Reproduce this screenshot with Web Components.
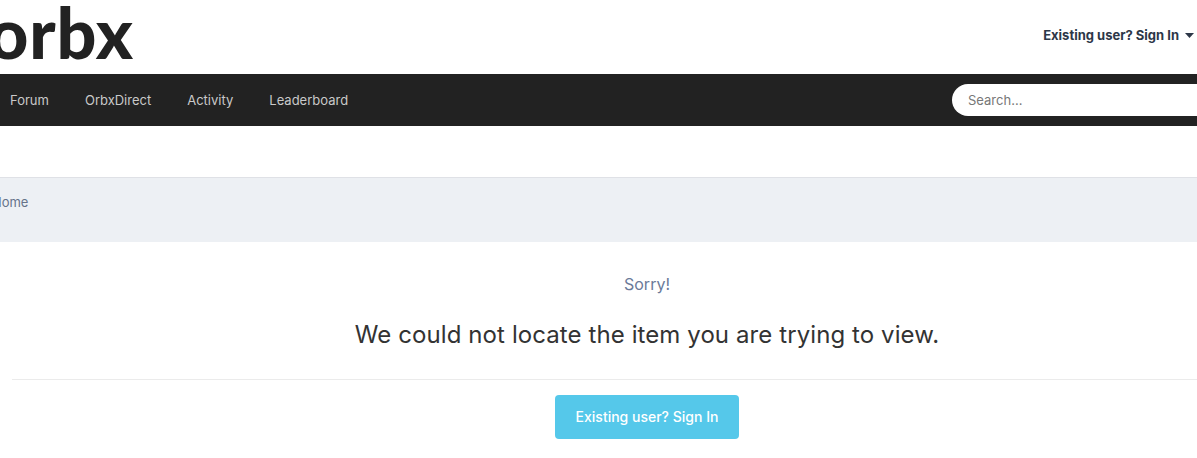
<!DOCTYPE html>
<html><head><meta charset="utf-8"><style>
html,body{margin:0;padding:0;background:#fff;overflow:hidden;height:458px}
body{font-family:Inter,"Liberation Sans",sans-serif}
</style></head><body>
<site-header></site-header>
<site-nav>
<nav-link>Forum</nav-link><nav-link>OrbxDirect</nav-link><nav-link>Activity</nav-link><nav-link>Leaderboard</nav-link>
</site-nav>
<bread-crumb>Home</bread-crumb>
<error-panel></error-panel>
<script>
function def(name,html){customElements.define(name,class extends HTMLElement{constructor(){super();this.attachShadow({mode:'open'}).innerHTML=html;}});}
def('site-header',`<style>
:host{display:flex;justify-content:space-between;align-items:center;height:74px;overflow:hidden;color:#222}
.logo{margin-left:-12px;margin-top:-11px;font:900 70px/74px Lato,sans-serif;letter-spacing:.8px;color:#222}
.user{display:flex;align-items:center;gap:6px;font:700 13px/20px Inter,sans-serif;color:#2d3748;margin-right:3px;margin-bottom:4px}
svg{display:block}
</style><div class="logo">orbx</div><div class="user">Existing user? Sign In<svg width="9" height="5" viewBox="0 0 9 5"><path d="M0 0h9L4.5 5z" fill="#2d3748"/></svg></div>`);
def('site-nav',`<style>
:host{display:flex;justify-content:space-between;align-items:center;height:52px;background:#222;overflow:hidden}
.links{display:flex;gap:36px;padding-left:10px}
.search{flex:none;width:300px;height:32px;margin-right:-55px;background:#fff;border-radius:16px;box-sizing:border-box;padding-left:16px;font:13px/32px Inter,sans-serif;color:#777}
</style><div class="links"><slot></slot></div><div class="search">Search...</div>`);
def('nav-link',`<style>:host{display:block;font:400 13px/20px Inter,sans-serif;color:#c9c9c9}</style><slot></slot>`);
def('bread-crumb',`<style>
:host{display:block;margin-top:51px;height:65px;background:#edf0f4;box-shadow:inset 0 1px 0 #dfe1e6;overflow:hidden;font:13px/20px Inter,sans-serif;color:#66738a}
div{margin-left:-8px;padding-top:15px}
</style><div><slot></slot></div>`);
def('error-panel',`<style>
:host{display:block;width:1270px;margin-left:12px;text-align:center}
.sorry{padding-top:31px;font:16px/22px Inter,sans-serif;color:#6b7a99}
h1{margin:24px 0 0;font:400 24px/32px Inter,sans-serif;letter-spacing:.09px;color:#333}
hr{margin:28px 0 15px;border:0;border-top:1px solid #ebebeb}
.btn{display:inline-block;width:184px;height:44px;box-sizing:border-box;background:#55c8ea;border-radius:4px;color:#fff;font:500 14px/44px Inter,sans-serif}
</style><div class="sorry">Sorry!</div><h1>We could not locate the item you are trying to view.</h1><hr><div class="btn">Existing user? Sign In</div>`);
</script>
</body></html>
